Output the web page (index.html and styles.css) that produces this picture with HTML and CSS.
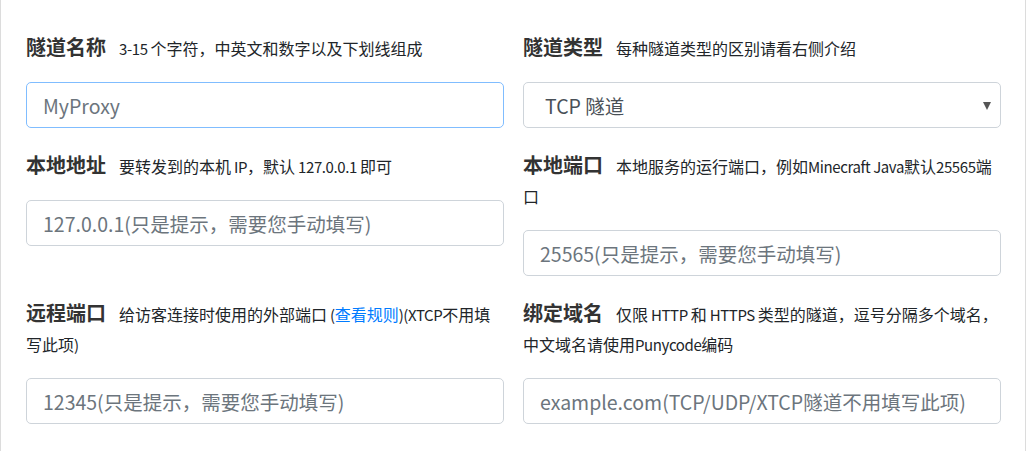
FILE: index.html
```html
<!DOCTYPE html>
<html lang="zh-CN">
<head>
  <meta charset="UTF-8" />
  <meta name="viewport" content="width=device-width, initial-scale=1.0"/>
  <title>创建隧道</title>
  <link rel="stylesheet" href="styles.css">
</head>
<body>
  <div class="card">
    <div class="form-grid">
      <!-- 隧道名称 -->
      <div class="field">
        <label class="label">隧道名称<small><span class="en">3-15 </span>个字符，中英文和数字以及下划线组成</small></label>
        <input type="text" class="input focused" placeholder="MyProxy" />
      </div>

      <!-- 隧道类型 -->
      <div class="field">
        <label class="label">隧道类型<small>每种隧道类型的区别请看右侧介绍</small></label>
        <div class="select-wrap">
          <select class="input select">
            <option>TCP 隧道</option>
            <option>UDP 隧道</option>
            <option>HTTP 隧道</option>
            <option>HTTPS 隧道</option>
            <option>XTCP 隧道</option>
          </select>
        </div>
      </div>

      <!-- 本地地址 -->
      <div class="field">
        <label class="label">本地地址<small>要转发到的本机<span class="en"> IP</span>，默认<span class="en"> 127.0.0.1 </span>即可</small></label>
        <input type="text" class="input" placeholder="127.0.0.1(只是提示，需要您手动填写)" />
      </div>

      <!-- 本地端口 -->
      <div class="field">
        <label class="label">本地端口<small>本地服务的运行端口，例如<span class="en">Minecraft Java</span>默认<span class="en">25565</span>端口</small></label>
        <input type="text" class="input" placeholder="25565(只是提示，需要您手动填写)" />
      </div>

      <!-- 远程端口 -->
      <div class="field">
        <label class="label">远程端口<small>给访客连接时使用的外部端口<span class="en"> (</span><a href="#">查看规则</a><span class="en">)(XTCP</span>不用填写此项<span class="en">)</span></small></label>
        <input type="text" class="input" placeholder="12345(只是提示，需要您手动填写)" />
      </div>

      <!-- 绑定域名 -->
      <div class="field">
        <label class="label">绑定域名<small>仅限<span class="en"> HTTP </span>和<span class="en"> HTTPS </span>类型的隧道，逗号分隔多个域名，中文域名请使用<span class="en">Punycode</span>编码</small></label>
        <input type="text" class="input" placeholder="example.com(TCP/UDP/XTCP隧道不用填写此项)" />
      </div>
    </div>
  </div>
</body>
</html>
```

FILE: styles.css
```css
html, body { margin: 0; background: #fff; }
body { font-family: "Noto Sans CJK SC", "Noto Sans", sans-serif; color: #212529; }

.card {
  box-sizing: border-box;
  width: 1026px;
  min-height: 451px;
  border-left: 1px solid #dcdcdc;
  border-right: 1px solid #dcdcdc;
  padding: 32px 24px 20px 25px;
}

.form-grid {
  display: grid;
  grid-template-columns: 478px 478px;
  column-gap: 19px;
  row-gap: 22px;
}

.field { display: flex; flex-direction: column; }

.label {
  display: block;
  font-size: 20px;
  font-weight: bold;
  line-height: 30px;
  color: #333;
  margin-bottom: 20px;
}
.label small {
  font-size: 16px;
  line-height: 1;
  font-weight: normal;
  color: #212529;
  margin-left: 13px;
}
/* latin runs in the hints are set a touch narrower */
.label .en { font-size: 15px; letter-spacing: -0.4px; }
.label a { color: #007bff; text-decoration: none; }

.input {
  box-sizing: border-box;
  width: 100%;
  height: 46px;
  padding: 0 16px;
  font-family: inherit;
  font-size: 19.5px;
  color: #495057;
  background: #fff;
  border: 1px solid #ced4da;
  border-radius: 5px;
  outline: none;
}
.input::placeholder { color: #6c757d; }
.input.focused { border-color: #80bdff; }

/* select with custom arrow */
.select-wrap { position: relative; }
.select {
  appearance: none;
  -webkit-appearance: none;
  padding-left: 21px;
}
.select-wrap::after {
  content: "";
  position: absolute;
  right: 10px;
  top: 20px;
  border-left: 4px solid transparent;
  border-right: 4px solid transparent;
  border-top: 8px solid #555;
  pointer-events: none;
}
```
